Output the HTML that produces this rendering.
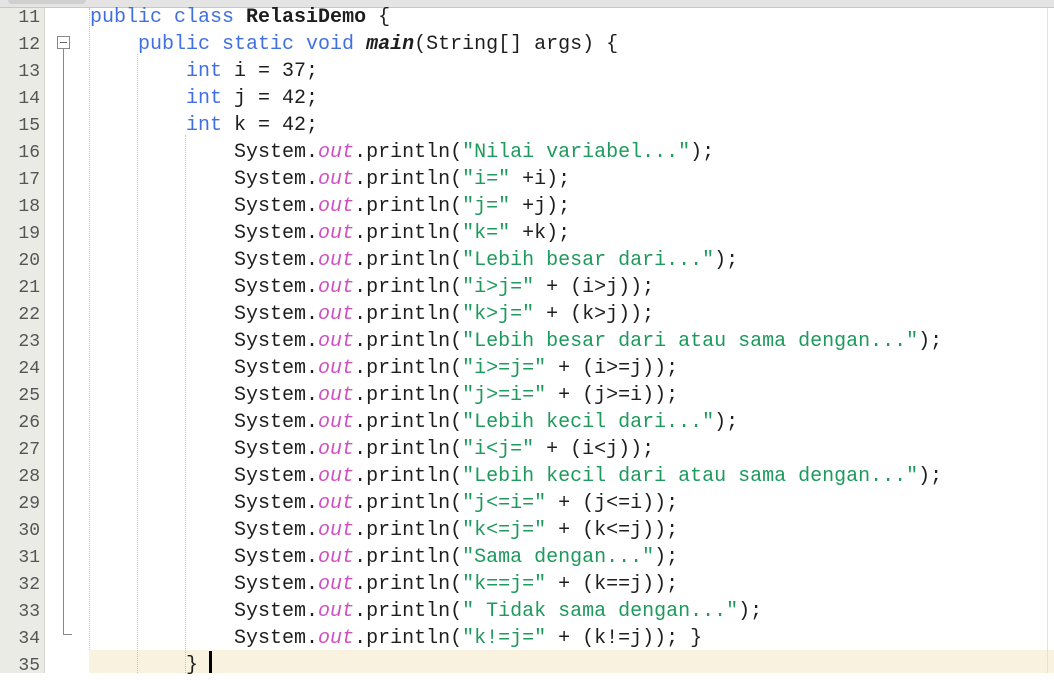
<!DOCTYPE html>
<html><head><meta charset="utf-8"><style>
body{margin:0;width:1054px;height:673px;overflow:hidden;background:#fff;position:relative;font-family:"Liberation Mono",monospace;}
.top{position:absolute;left:0;top:0;width:1054px;height:7px;background:#e4e4e4;border-bottom:1px solid #c8c8c8;}
.top i{position:absolute;left:8px;top:0;width:78px;height:4px;background:#cfcfcf;border-radius:0 0 4px 4px;}
.gut{position:absolute;left:0;top:8px;width:44px;height:665px;background:#ebebe6;border-right:1px solid #d6d6d0;}
.hl{position:absolute;left:89px;top:650px;width:965px;height:23px;background:#f8f2df;}
.g{position:absolute;top:8px;width:0;border-left:1px dotted #c4c4c4;}
.ln{position:absolute;left:0;width:40px;text-align:right;font-size:18px;color:#555;line-height:27px;}
.code{position:absolute;left:90px;top:4px;font-size:20px;line-height:27px;white-space:pre;color:#1e1e1e;}
.k{color:#4070e0}.s{color:#1d9a5c}.o{color:#d050c0;font-style:italic}.b{font-weight:bold}
.fold{position:absolute;left:57px;top:36px;width:11px;height:11px;border:1px solid #888;background:#fff;}
.fold:after{content:"";position:absolute;left:2px;top:5px;width:7px;height:1px;background:#666;}
.fl{position:absolute;left:63px;top:49px;width:1px;height:586px;background:#888;}
.fh{position:absolute;left:63px;top:634px;width:9px;height:1px;background:#888;}
.cur{position:absolute;left:209px;top:651px;width:3px;height:22px;background:#000;}
.mg{position:absolute;left:1047px;top:8px;width:1px;height:665px;background:#f0d8e8;}
</style></head><body>
<div class="top"><i></i></div>
<div class="gut"></div>
<div class="hl"></div>
<div class="mg"></div>
<div class="g" style="left:89px;height:642px"></div>
<div class="g" style="left:137px;top:54px;height:619px"></div>
<div class="g" style="left:185px;top:135px;height:538px"></div>
<div class="fold"></div><div class="fl"></div><div class="fh"></div>
<div class="ln" style="top:5px">11<br>12<br>13<br>14<br>15<br>16<br>17<br>18<br>19<br>20<br>21<br>22<br>23<br>24<br>25<br>26<br>27<br>28<br>29<br>30<br>31<br>32<br>33<br>34<br>35</div>
<div class="code"><span class="k">public class</span> <span class="b">RelasiDemo</span> {
    <span class="k">public static void</span> <span class="b" style="font-style:italic">main</span>(String[] args) {
        <span class="k">int</span> i = 37;
        <span class="k">int</span> j = 42;
        <span class="k">int</span> k = 42;
            System.<span class="o">out</span>.println(<span class="s">"Nilai variabel..."</span>);
            System.<span class="o">out</span>.println(<span class="s">"i="</span> +i);
            System.<span class="o">out</span>.println(<span class="s">"j="</span> +j);
            System.<span class="o">out</span>.println(<span class="s">"k="</span> +k);
            System.<span class="o">out</span>.println(<span class="s">"Lebih besar dari..."</span>);
            System.<span class="o">out</span>.println(<span class="s">"i&gt;j="</span> + (i&gt;j));
            System.<span class="o">out</span>.println(<span class="s">"k&gt;j="</span> + (k&gt;j));
            System.<span class="o">out</span>.println(<span class="s">"Lebih besar dari atau sama dengan..."</span>);
            System.<span class="o">out</span>.println(<span class="s">"i&gt;=j="</span> + (i&gt;=j));
            System.<span class="o">out</span>.println(<span class="s">"j&gt;=i="</span> + (j&gt;=i));
            System.<span class="o">out</span>.println(<span class="s">"Lebih kecil dari..."</span>);
            System.<span class="o">out</span>.println(<span class="s">"i&lt;j="</span> + (i&lt;j));
            System.<span class="o">out</span>.println(<span class="s">"Lebih kecil dari atau sama dengan..."</span>);
            System.<span class="o">out</span>.println(<span class="s">"j&lt;=i="</span> + (j&lt;=i));
            System.<span class="o">out</span>.println(<span class="s">"k&lt;=j="</span> + (k&lt;=j));
            System.<span class="o">out</span>.println(<span class="s">"Sama dengan..."</span>);
            System.<span class="o">out</span>.println(<span class="s">"k==j="</span> + (k==j));
            System.<span class="o">out</span>.println(<span class="s">" Tidak sama dengan..."</span>);
            System.<span class="o">out</span>.println(<span class="s">"k!=j="</span> + (k!=j)); }
        }</div>
<div class="cur"></div>
</body></html>
